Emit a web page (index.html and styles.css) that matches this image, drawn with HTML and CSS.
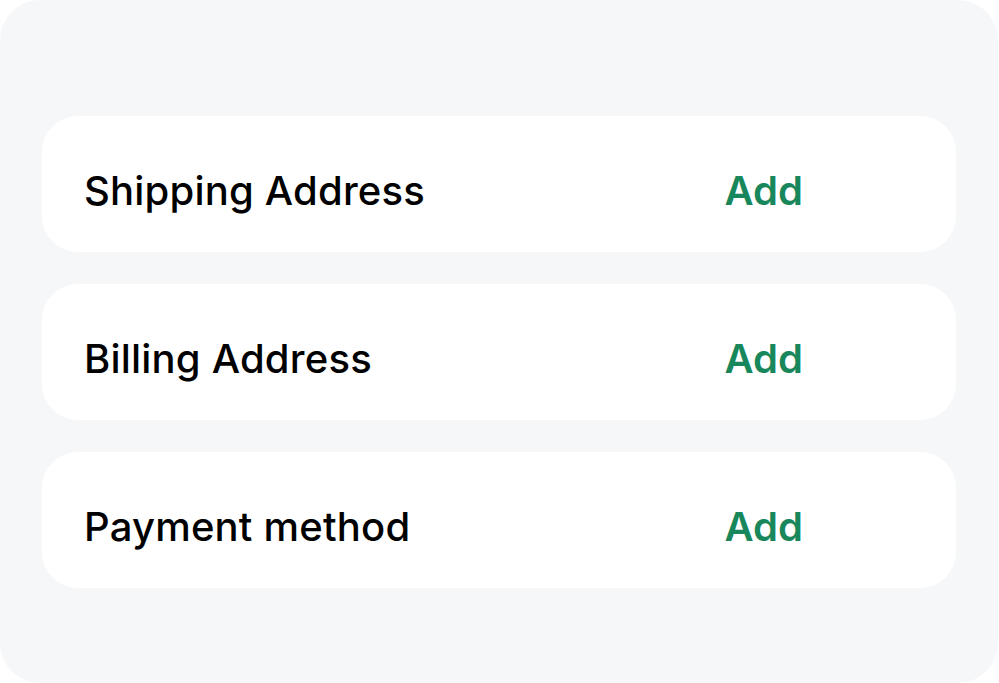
FILE: index.html
```html
<!DOCTYPE html>
<html>
<head>
<meta charset="utf-8">
<link rel="stylesheet" href="styles.css">
</head>
<body>
<div class="panel">
  <div class="row"><span class="label">Shipping Address</span><span class="add">Add</span></div>
  <div class="row"><span class="label">Billing Address</span><span class="add">Add</span></div>
  <div class="row"><span class="label">Payment method</span><span class="add">Add</span></div>
</div>
</body>
</html>
```
FILE: styles.css
```css
html, body {
  margin: 0;
  padding: 0;
  background: #ffffff;
}
body {
  width: 999px;
  height: 683px;
  font-family: Inter, "Liberation Sans", sans-serif;
}
.panel {
  box-sizing: border-box;
  width: 998px;
  height: 683px;
  background: #f6f7f9;
  border-radius: 40px;
  padding: 116px 42px 0 42px;
  display: flex;
  flex-direction: column;
  gap: 32px;
}
.row {
  box-sizing: border-box;
  height: 136px;
  width: 914px;
  background: #ffffff;
  border-radius: 36px;
  display: flex;
  align-items: center;
  justify-content: space-between;
  padding: 12px 153px 0 42px;
}
.label {
  font-size: 40px;
  font-weight: 500;
  color: #000000;
  letter-spacing: 0.2px;
}
.add {
  font-size: 40px;
  font-weight: 600;
  color: #18875c;
}
```
